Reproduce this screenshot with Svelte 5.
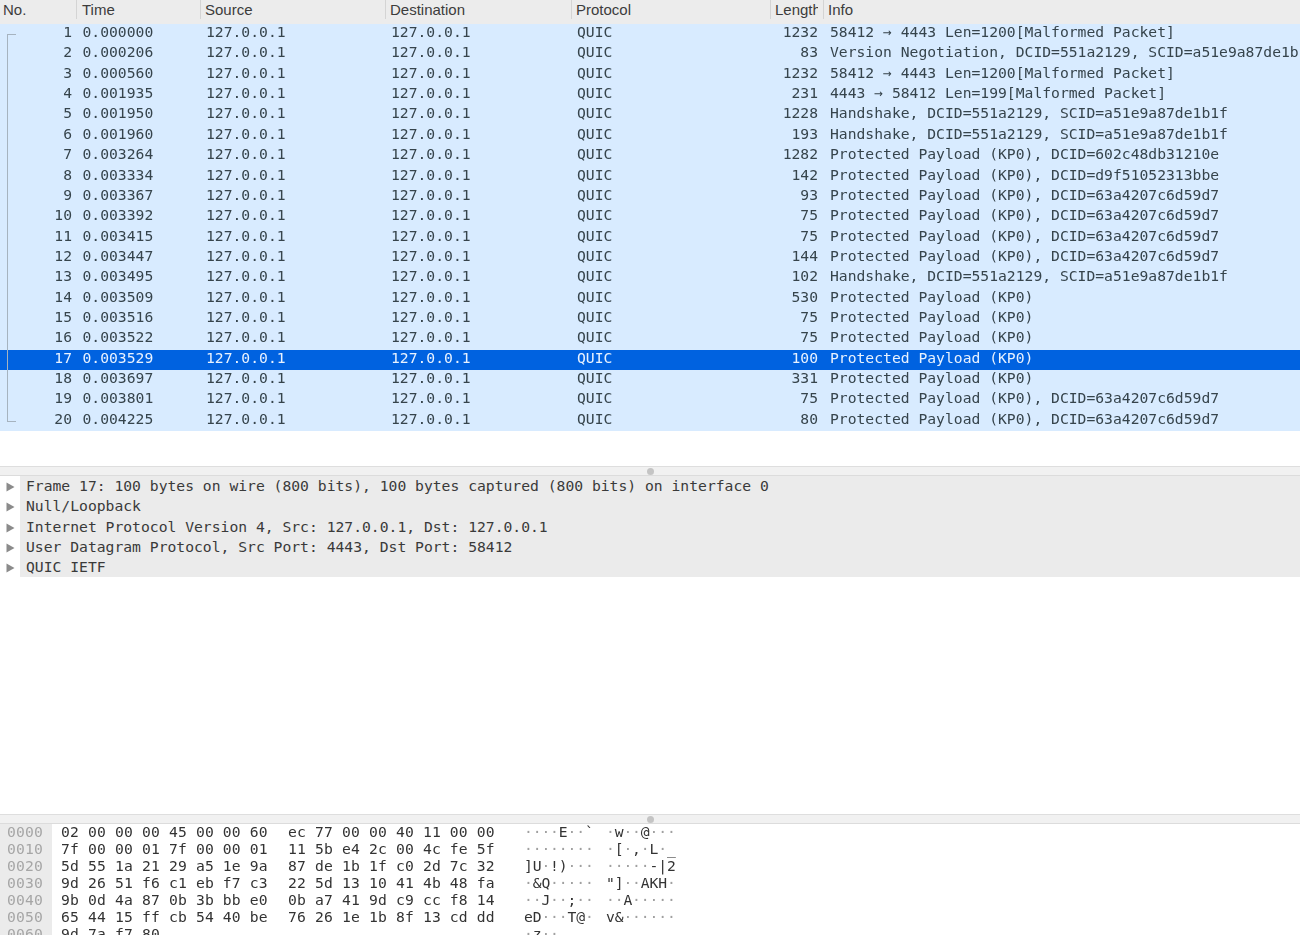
<script>
  const dst = '127.0.0.1';
  const P = 'Protected Payload (KP0)';
  const K = (d) => `${P}, DCID=${d}`;
  const HS = 'Handshake, DCID=551a2129, SCID=a51e9a87de1b1f';
  const D = '63a4207c6d59d7';
  const packets = [
    ['0.000000', 1232, '58412 → 4443 Len=1200[Malformed Packet]'],
    ['0.000206', 83, 'Version Negotiation, DCID=551a2129, SCID=a51e9a87de1b1f'],
    ['0.000560', 1232, '58412 → 4443 Len=1200[Malformed Packet]'],
    ['0.001935', 231, '4443 → 58412 Len=199[Malformed Packet]'],
    ['0.001950', 1228, HS],
    ['0.001960', 193, HS],
    ['0.003264', 1282, K('602c48db31210e')],
    ['0.003334', 142, K('d9f51052313bbe')],
    ['0.003367', 93, K(D)],
    ['0.003392', 75, K(D)],
    ['0.003415', 75, K(D)],
    ['0.003447', 144, K(D)],
    ['0.003495', 102, HS],
    ['0.003509', 530, P],
    ['0.003516', 75, P],
    ['0.003522', 75, P],
    ['0.003529', 100, P],
    ['0.003697', 331, P],
    ['0.003801', 75, K(D)],
    ['0.004225', 80, K(D)]
  ];
  const details = [
    'Frame 17: 100 bytes on wire (800 bits), 100 bytes captured (800 bits) on interface 0',
    'Null/Loopback',
    'Internet Protocol Version 4, Src: 127.0.0.1, Dst: 127.0.0.1',
    'User Datagram Protocol, Src Port: 4443, Dst Port: 58412',
    'QUIC IETF'
  ];
  const hex = [
    '02 00 00 00 45 00 00 60|ec 77 00 00 40 11 00 00',
    '7f 00 00 01 7f 00 00 01|11 5b e4 2c 00 4c fe 5f',
    '5d 55 1a 21 29 a5 1e 9a|87 de 1b 1f c0 2d 7c 32',
    '9d 26 51 f6 c1 eb f7 c3|22 5d 13 10 41 4b 48 fa',
    '9b 0d 4a 87 0b 3b bb e0|0b a7 41 9d c9 cc f8 14',
    '65 44 15 ff cb 54 40 be|76 26 1e 1b 8f 13 cd dd',
    '9d 7a f7 80|'
  ].map((line, i) => {
    const [a, b] = line.split('|');
    const ascii = (s) =>
      s ? s.split(' ').map((h) => {
        const c = parseInt(h, 16);
        return c > 31 && c < 127 ? String.fromCharCode(c) : '·';
      }) : [];
    return { off: (i * 16).toString(16).padStart(4, '0'), a, b, ca: ascii(a), cb: ascii(b) };
  });
</script>

<div class="app">
  <header class="cols head">
    <div class="hc first">No.</div>
    <div class="hc time-h">Time</div>
    <div class="hc">Source</div>
    <div class="hc">Destination</div>
    <div class="hc">Protocol</div>
    <div class="hc len-h">Length</div>
    <div class="hc">Info</div>
  </header>

  <section class="list">
    <span class="bracket"></span>
    {#each packets as p, i}
      <div class="cols row" class:sel={i === 16}>
        <div class="num">{i + 1}</div>
        <div class="c time">{p[0]}</div>
        <div class="c src">{dst}</div>
        <div class="c dst">{dst}</div>
        <div class="c proto">QUIC</div>
        <div class="len">{p[1]}</div>
        <div class="c info">{p[2]}</div>
      </div>
    {/each}
  </section>

  <div class="split"><span class="dot"></span></div>

  <section class="details">
    {#each details as d}
      <div class="drow">
        <span class="tri"><svg width="9" height="10" viewBox="0 0 9 10"><path d="M0.5 0.5 L8.5 5 L0.5 9.5 Z" /></svg></span>
        <span class="dtext">{d}</span>
      </div>
    {/each}
  </section>

  <div class="split"><span class="dot"></span></div>

  <section class="hex">
    {#each hex as h}
      <div class="hrow">
        <div class="off">{h.off}</div>
        <div class="bytes">{h.a}</div>
        <div class="bytes">{h.b}</div>
        <div class="asc">{#each h.ca as c}<span class:np={c === '·'}>{c}</span>{/each}</div>
        <div class="asc">{#each h.cb as c}<span class:np={c === '·'}>{c}</span>{/each}</div>
      </div>
    {/each}
  </section>
</div>

<style>
  :global(body) {
    margin: 0;
    background: #fff;
  }
  .app {
    height: 935px;
    width: 1300px;
    overflow: hidden;
    display: flex;
    flex-direction: column;
    font-family: "DejaVu Sans Mono", monospace;
    font-size: 14.7px;
    color: #36444c;
    filter: blur(0.4px);
  }
  .cols {
    display: grid;
    grid-template-columns: 76px 124px 185px 186px 199px 53px 1fr;
  }
  .head {
    height: 24px;
    flex: none;
    background: #ececec;
    font-family: "Liberation Sans", Arial, sans-serif;
    font-size: 15px;
    color: #3c3c3c;
  }
  .hc {
    height: 19px;
    line-height: 19px;
    padding-left: 4px;
    border-left: 1px solid #d4d4d4;
    overflow: hidden;
    white-space: nowrap;
  }
  .hc.first {
    border-left: 0;
    padding-left: 3px;
  }
  .hc.time-h {
    padding-left: 5px;
  }
  .hc.len-h {
    box-sizing: border-box;
    width: 48px;
    justify-self: start;
  }
  .list {
    position: relative;
    height: 442px;
    flex: none;
  }
  .bracket {
    position: absolute;
    left: 7px;
    top: 10px;
    width: 9px;
    height: 388px;
    box-sizing: border-box;
    border: 1.5px solid #a6b3bf;
    border-right: 0;
    z-index: 1;
  }
  .row {
    height: 20.37px;
    background: #d8ebff;
    line-height: 16.5px;
    white-space: nowrap;
  }
  .row.sel {
    background: #0062e0;
    color: #e8f2ff;
  }
  .num {
    text-align: right;
    padding-right: 4px;
  }
  .c {
    padding-left: 6px;
    overflow: hidden;
  }
  .time {
    padding-left: 6.5px;
  }
  .len {
    text-align: right;
    padding-right: 5px;
  }
  .info {
    overflow: hidden;
    padding-left: 7px;
  }
  .split {
    height: 9px;
    flex: none;
    position: relative;
    background: #f1f1f1;
    border-top: 1px solid #dedede;
    border-bottom: 0;
    box-shadow: inset 0 -1px 0 #dcdcdc;
  }
  .dot {
    position: absolute;
    left: 647px;
    top: 1px;
    width: 7px;
    height: 7px;
    border-radius: 50%;
    background: #c4c4c4;
  }
  .details {
    height: 338px;
    flex: none;
  }
  .drow {
    height: 20.3px;
    line-height: 19px;
    display: flex;
  }
  .tri {
    width: 20px;
    flex: none;
    display: flex;
    align-items: center;
    padding-left: 6px;
    padding-top: 2px;
    box-sizing: border-box;
    height: 20px;
  }
  .tri path {
    fill: #8b8b8b;
  }
  .dtext {
    flex: 1;
    background: #ebebeb;
    padding-left: 6px;
    color: #3a3a3a;
    white-space: nowrap;
  }
  .hex {
    flex: 1;
    overflow: hidden;
  }
  .hrow {
    display: grid;
    grid-template-columns: 52px 227px 245px 82px 1fr;
    height: 17px;
    line-height: 15.5px;
    color: #333;
    white-space: nowrap;
  }
  .off {
    background: #ebebeb;
    color: #a6a6a6;
    padding-left: 7px;
    letter-spacing: 0.15px;
  }
  .bytes {
    padding-left: 9px;
    letter-spacing: 0.15px;
  }
  .asc {
    letter-spacing: -0.15px;
  }
  .np {
    color: #a0a0a0;
  }
</style>
